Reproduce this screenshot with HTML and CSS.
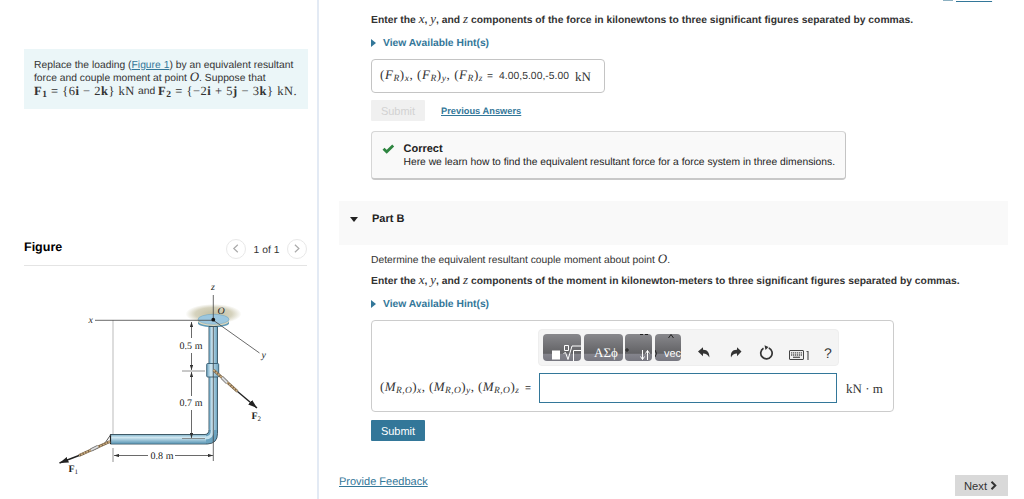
FILE: index.html
```html
<!DOCTYPE html>
<html lang="en">
<head>
  <meta charset="UTF-8">
  <title>Equivalent Resultant Force</title>
  <link rel="stylesheet" href="styles.css">
</head>
<body>

  <div class="page">
    <aside class="left">
      <div class="problem">
        <div class="problem-line l1">Replace the loading (<a href="#">Figure 1</a>) by an equivalent resultant</div>
        <div class="problem-line l2">force and couple moment at point <i class="math">O</i>. Suppose that</div>
        <div class="problem-line l3"><span class="math vec1"><b>F</b><b class="sub">1</b> = {6<b>i</b> − 2<b>k</b>} kN</span><span class="and">and</span><span class="math vec2"><b>F</b><b class="sub">2</b> = {−2<b>i</b> + 5<b>j</b> − 3<b>k</b>} kN.</span></div>
      </div>

      <div class="figure-head">
        <h2>Figure</h2>
        <div class="pager">
          <span class="circle"><svg width="20" height="20" viewBox="0 0 20 20"><path d="M11.8 5.7 7.8 9.5l4 3.8"/></svg></span>
          <span class="count">1 of 1</span>
          <span class="circle"><svg width="20" height="20" viewBox="0 0 20 20"><path d="M7.9 5.7l4 3.8-4 3.8"/></svg></span>
        </div>
      </div>

      <svg class="figure" width="240" height="205" viewBox="50 275 240 205">
        <defs>
          <linearGradient id="pipeV" x1="0" x2="1" y1="0" y2="0">
            <stop offset="0" stop-color="#6fa6c2"/>
            <stop offset=".35" stop-color="#d3e9f3"/>
            <stop offset="1" stop-color="#6ba3bf"/>
          </linearGradient>
          <linearGradient id="pipeH" x1="0" x2="0" y1="0" y2="1">
            <stop offset="0" stop-color="#8dbbd0"/>
            <stop offset=".3" stop-color="#d0e7f1"/>
            <stop offset="1" stop-color="#5f9ab8"/>
          </linearGradient>
          <radialGradient id="ceiling">
            <stop offset="0" stop-color="#c2bea1"/>
            <stop offset=".65" stop-color="#d5d2bd"/>
            <stop offset="1" stop-color="#fff"/>
          </radialGradient>
          <marker id="dim" viewBox="0 0 6 4" refX="6" refY="2" markerWidth="5" markerHeight="3.4" markerUnits="userSpaceOnUse" orient="auto"><path d="M0 0l6 2-6 2z" fill="#333"/></marker>
          <marker id="force" viewBox="0 0 9 6" refX="9" refY="3" markerWidth="9" markerHeight="6" markerUnits="userSpaceOnUse" orient="auto"><path d="M0 0l9 3-9 3z" fill="#222"/></marker>
        </defs>

        <!-- ceiling and flange -->
        <ellipse cx="213.5" cy="314" rx="28" ry="10" fill="url(#ceiling)"/>
        <path d="M198 319.500v4c2 5 29 5 31 0v-4z" fill="#5e9ab8"/>
        <ellipse cx="213.500" cy="321" rx="15.500" ry="5" fill="#ddd8bd"/>
        <ellipse cx="213.500" cy="319.300" rx="15.500" ry="5" fill="#9cc7df" stroke="#6aa0bd" stroke-width=".5"/>

        <!-- pipe -->
        <path d="M113 320v114" stroke="#bbb"/>
        <path d="M110.500 434.500H205q4-.3 4-5v-103h8.500v107q0 10-10 10.500h-97z" fill="#6ba3bf" stroke="#334c59" stroke-width=".9"/>
        <path d="M111 435h95v8.400h-95z" fill="url(#pipeH)"/>
        <path d="M209.400 327h7.700v103h-7.700z" fill="url(#pipeV)"/>
        <path d="M205 438q7.500 0 7.500-8" fill="none" stroke="#c4e1ed" stroke-width="3"/>
        <rect x="206.700" y="363.500" width="12" height="13.500" rx="1" fill="url(#pipeV)" stroke="#345b70" stroke-width=".9"/>
        <path d="M110.500 434.500v9.500" stroke="#222" stroke-width="1.200"/>

        <!-- axes and dimensions -->
        <g stroke="#444" stroke-width=".8" fill="none">
          <path d="M95 320.300h118M213.300 295v25M213.300 327v134M213 320l46.500 33"/>
          <path d="M182 371h23M182 438.500h23M113 448v14" stroke="#777"/>
          <path d="M191.500 338v-16" marker-end="url(#dim)"/>
          <path d="M191.500 353v17" marker-end="url(#dim)"/>
          <path d="M191.500 396v-24" marker-end="url(#dim)"/>
          <path d="M191.500 410v28" marker-end="url(#dim)"/>
          <path d="M148 455.500h-34" marker-end="url(#dim)"/>
          <path d="M175 455.500h38" marker-end="url(#dim)"/>
        </g>
        <circle cx="213.300" cy="319.700" r="1.900" fill="#111"/>

        <!-- ropes and forces -->
        <path d="M105 443l5.500-8M105 443l5.500-1" stroke="#555" fill="none"/>
        <path d="M110 441.500L79 455.500M213.500 370l24 21.500" stroke="#725d43" stroke-width="2.800"/>
        <path d="M110 441.500L79 455.500M213.500 370l24 21.500" stroke="#c7aa7e" stroke-width="1.800" stroke-dasharray="2 1"/>
        <path d="M98 446.500l-7 3.500M222 377.500l5 5" stroke="#777" stroke-width="3.500"/>
        <path d="M98 446.500l-7 3.500M222 377.500l5 5" stroke="#ddd" stroke-width="1.800"/>
        <path d="M79 455.500L59.500 463" stroke="#222" stroke-width="1.400" marker-end="url(#force)"/>
        <path d="M237.500 391.500L257 408" stroke="#222" stroke-width="1.400" marker-end="url(#force)"/>

        <g class="labels">
          <text x="88.500" y="322.500" font-style="italic">x</text>
          <text x="211" y="290" font-style="italic">z</text>
          <text x="217.500" y="314" font-style="italic">O</text>
          <text x="261.500" y="358" font-style="italic">y</text>
          <text x="179.500" y="349" textLength="23">0.5 m</text>
          <text x="179.500" y="406" textLength="23">0.7 m</text>
          <text x="150.500" y="459" textLength="23">0.8 m</text>
          <text x="68.500" y="472" font-weight="bold">F<tspan font-size="7" dy="2" font-weight="normal">1</tspan></text>
          <text x="251.500" y="419" font-weight="bold">F<tspan font-size="7" dy="2" font-weight="normal">2</tspan></text>
        </g>
      </svg>
    </aside>

    <main class="right">
      <div class="review"><span class="review-icon"></span><a href="#">Review</a></div>

      <section class="part">
        <p class="prompt first">Enter the <i class="math">x</i>, <i class="math">y</i>, and <i class="math">z</i> components of the force in kilonewtons to three significant figures separated by commas.</p>
        <div class="hint"><span class="tri-right"></span>View Available Hint(s)</div>
        <div class="answered">
          <span class="math vars-f">(<i>F</i><i class="sub">R</i>)<i class="sub">x</i>, (<i>F</i><i class="sub">R</i>)<i class="sub">y</i>, (<i>F</i><i class="sub">R</i>)<i class="sub">z</i></span>
          <span class="eq">=</span>
          <span class="value">4.00,5.00,-5.00</span>
          <span class="math unit">kN</span>
        </div>
        <div class="actions">
          <button class="btn disabled" disabled>Submit</button>
          <a class="previous" href="#">Previous Answers</a>
        </div>
        <div class="feedback">
          <svg width="13" height="10" viewBox="0 0 13 10"><path d="M1.500 4.800l3.200 3 6.500-6.300" fill="none" stroke="#2e8540" stroke-width="2.800"/></svg>
          <div>
            <strong>Correct</strong>
            <p>Here we learn how to find the equivalent resultant force for a force system in three dimensions.</p>
          </div>
        </div>
      </section>

      <div class="part-head"><span class="tri-down"></span>Part B</div>

      <section class="part">
        <p class="about">Determine the equivalent resultant couple moment about point <i class="math">O</i>.</p>
        <p class="prompt second">Enter the <i class="math">x</i>, <i class="math">y</i>, and <i class="math">z</i> components of the moment in kilonewton-meters to three significant figures separated by commas.</p>
        <div class="hint hint-b"><span class="tri-right"></span>View Available Hint(s)</div>
        <div class="answer-box">
          <div class="toolbar">
            <span class="tool t1"><svg width="38" height="27" viewBox="0 0 38 27"><path d="M9 16.500h8v9H9z" fill="#fff"/><path d="M21.500 11.500h4v5h-4zM20.500 19.500l2-1 2.500 7 4-13.500h9M30.500 27V16.500H38" fill="none" stroke="#fff"/></svg></span>
            <span class="tool t2">ΑΣϕ</span>
            <span class="tool t3"><svg width="27" height="27" viewBox="0 0 27 27"><path d="M0 16h4M2 14v4M15 .5h3m2 0h3" stroke="#222" fill="none"/><path d="M17.500 16v9.500l-2-3M22.500 26v-9.500l-2 3M22.500 16.500l2 3M17.500 25.500l2-3" stroke="#fff" fill="none"/></svg></span>
            <span class="tool t4"><svg width="26" height="27" viewBox="0 0 26 27"><path d="M13.500 4l2.500-3.500L18.500 4M0 16q3 3.500 0 7" stroke="#222" fill="none"/></svg><span>vec</span></span>
            <svg class="icon undo" width="12" height="11" viewBox="0 0 12 11"><path d="M0 4.500L5 .3v2.500c4.500-.2 6.500 3.200 6.400 7.700C9.800 7.600 8.200 6.500 5 6.500v2.700z"/></svg>
            <svg class="icon redo" width="12" height="11" viewBox="0 0 12 11"><path d="M11.500 4.500L7 .3v2.500C2.300 2.600.3 6 1 10.500 2.200 7.600 4 6.500 7 6.500v2.700z"/></svg>
            <svg class="icon reset" width="15" height="16" viewBox="0 0 15 16"><path d="M9.800 3.900a5.700 5.700 0 1 1-5.300.3" fill="none" stroke="#333" stroke-width="1.700"/><path d="M5.500 1.200L9.500 3 6.500 6z"/></svg>
            <svg class="icon keyboard" width="22" height="12" viewBox="0 0 22 12"><rect x=".5" y=".5" width="14" height="9" rx=".5" fill="#eee" stroke="#444"/><path d="M2 2.800h11M2 5h11" stroke="#555" stroke-width="1.300" stroke-dasharray="1.300 .7"/><path d="M4 7.300h7" stroke="#555" stroke-width="1.300"/><path d="M17.500 1.500h1.500v8.500" fill="none" stroke="#555" stroke-width="1.200"/></svg>
            <span class="help">?</span>
          </div>
          <div class="entry">
            <span class="math vars-m">(<i>M</i><i class="sub">R,O</i>)<i class="sub">x</i>, (<i>M</i><i class="sub">R,O</i>)<i class="sub">y</i>, (<i>M</i><i class="sub">R,O</i>)<i class="sub">z</i></span>
            <span class="eq">=</span>
            <input type="text">
            <span class="math unit-m">kN · m</span>
          </div>
        </div>
        <button class="btn submit">Submit</button>
      </section>

      <footer>
        <a class="provide" href="#">Provide Feedback</a>
        <button class="next">Next <svg width="8" height="9" viewBox="0 0 8 9"><path d="M1.500 .8L5.300 4.500 1.500 8.200" fill="none" stroke="#333" stroke-width="2"/></svg></button>
      </footer>
    </main>
  </div>

</body>
</html>
```
FILE: styles.css
```css
* {
  box-sizing: border-box;
}

body {
  margin: 0;
  background: #fff;
  color: #333;
  font-family: "Liberation Sans", Arial, sans-serif;
  font-size: 10.3px;
  overflow: hidden;
  text-rendering: geometricPrecision;
}

p, h2 {
  margin: 0;
}

a {
  color: #337799;
}

svg {
  display: block;
  flex: none;
}

.math {
  font-family: "Liberation Serif", "Times New Roman", serif;
  font-size: 13px;
  font-weight: normal;
  line-height: 1px;
}

.sub {
  font-size: 9.5px;
  position: relative;
  top: 2px;
}

.page {
  display: flex;
  height: 499px;
}

/* left column */
.left {
  width: 319px;
  flex: none;
  padding: 49px 10px 0 24px;
  border-right: 2px solid #e3eaf4;
}

.problem {
  width: 284px;
  height: 60px;
  padding: 10px 0 0 10px;
  background: #ebf6f8;
}

.problem-line {
  height: 13px;
  line-height: 13px;
  white-space: nowrap;
}

.l1 {
  letter-spacing: 0.01px;
}

.l3 {
  display: flex;
}

.l3 .math {
  font-size: 12.5px;
  line-height: 13px;
}

.vec1 {
  width: 104px;
  letter-spacing: 0.5px;
}

.and {
  width: 20px;
}

.vec2 {
  letter-spacing: 0.54px;
}

.figure-head {
  display: flex;
  justify-content: space-between;
  align-items: flex-start;
  width: 283px;
  height: 32px;
  margin-top: 125px;
  border-bottom: 1px solid #e4e4e4;
}

.figure-head h2 {
  margin-top: 6px;
  color: #000;
  font-size: 12.5px;
  line-height: 15px;
}

.pager {
  display: flex;
  align-items: center;
  margin-top: 5px;
}

.circle {
  width: 20px;
  height: 20px;
  border: 1px solid #e8e8e8;
  border-radius: 50%;
}

.circle svg {
  margin: -1px;
}

.circle path {
  fill: none;
  stroke: #aaa;
  stroke-width: 1.2;
}

.count {
  width: 41px;
  padding-top: 2px;
  text-align: center;
}

.figure {
  margin: 9px 0 0 26px;
}

.labels {
  font-family: "Liberation Serif", "Times New Roman", serif;
  font-size: 10px;
  fill: #222;
}

/* right column */
.right {
  width: 669px;
  margin-left: 20px;
}

.review {
  display: flex;
  align-items: flex-end;
  height: 3px;
  padding-left: 604px;
  font-size: 11px;
  line-height: 13px;
}

.review a {
  margin-bottom: -1px;
  text-decoration-thickness: 1px;
  text-underline-offset: 1px;
}

.review-icon {
  width: 10px;
  height: 1px;
  margin: 0 3px 2px 0;
  background: #8db1c2;
}

.part {
  padding-left: 32px;
}

.prompt {
  height: 15px;
  font-weight: bold;
  line-height: 15px;
  letter-spacing: 0.018px;
  white-space: nowrap;
}

.first {
  margin-top: 10px;
}

.hint {
  display: flex;
  align-items: center;
  height: 14px;
  margin-top: 8px;
  color: #337799;
  font-weight: bold;
}

.tri-right {
  margin-right: 7px;
  border: solid transparent;
  border-width: 4px 0 4px 5px;
  border-left-color: #337799;
}

.answered {
  display: flex;
  align-items: center;
  width: 234px;
  height: 34px;
  margin-top: 9px;
  padding-left: 8px;
  border: 1px solid #c4c4c4;
  border-radius: 4px;
}

.vars-f {
  width: 107px;
  letter-spacing: 0.56px;
  white-space: nowrap;
}

.answered .value {
  margin-left: 6px;
  letter-spacing: 0.05px;
}

.unit {
  margin-left: 6px;
}

.actions {
  display: flex;
  align-items: center;
  margin-top: 7px;
}

.btn {
  display: block;
  width: 54px;
  height: 21px;
  padding: 0;
  border: 0;
  border-radius: 1px;
  font: 11px "Liberation Sans", Arial, sans-serif;
}

.disabled {
  background: #f0f0f0;
  color: #d2d2d2;
}

.previous {
  margin-left: 16px;
  font-size: 9.3px;
  font-weight: bold;
}

.feedback {
  display: flex;
  width: 475px;
  height: 49px;
  margin-top: 10px;
  padding: 11px 0 0 10px;
  border: 1px solid #d6d6d6;
  border-right-color: #c4c4c4;
  border-bottom: 2px solid #c8c8c8;
  border-radius: 4px;
  background: #f9f9f9;
  color: #222;
  line-height: 13px;
  white-space: nowrap;
}

.feedback svg {
  margin: 1px 8.5px 0 0;
}

.feedback strong {
  display: block;
  font-size: 11px;
}

.part-head {
  display: flex;
  align-items: center;
  height: 44px;
  margin-top: 21px;
  padding: 0 0 8px 11px;
  background: #f9f9f9;
  color: #222;
  font-size: 11px;
  font-weight: bold;
}

.tri-down {
  margin-right: 14px;
  border: solid transparent;
  border-width: 5px 4px 0;
  border-top-color: #222;
}

.about {
  height: 15px;
  margin-top: 8px;
  line-height: 15px;
}

.second {
  margin-top: 6px;
}

.hint-b {
  margin-top: 8px;
}

.answer-box {
  width: 523px;
  height: 92px;
  margin-top: 9px;
  padding: 8px 0 0 8px;
  border: 1px solid #ccc;
  border-radius: 4px;
}

.toolbar {
  display: flex;
  width: 301px;
  height: 37px;
  margin-left: 158px;
  padding: 4px 0 0 4px;
  border: 1px solid #eee;
  border-radius: 4px;
  background: #f4f4f4;
}

.tool {
  height: 27px;
  margin-right: 3px;
  border-radius: 4px;
  overflow: hidden;
  background: linear-gradient(#88888c, #626265 72%, #85858d 73%, #777780);
  color: #fff;
}

.t1 {
  width: 38px;
}

.t2 {
  width: 39px;
  margin-right: 2px;
  padding: 10px 0 0 10px;
  font: 13px/17px "Liberation Serif", "Times New Roman", serif;
}

.t3 {
  width: 27px;
}

.t4 {
  display: grid;
  width: 26px;
}

.t4 > * {
  grid-area: 1 / 1;
}

.t4 span {
  padding: 14px 0 0 9px;
  font-size: 11px;
  line-height: 13px;
}

.icon {
  fill: #333;
}

.undo {
  margin: 13px 0 0 14px;
}

.redo {
  margin: 13px 0 0 20px;
}

.reset {
  margin: 10px 0 0 17px;
}

.keyboard {
  margin: 16px 0 0 15px;
}

.help {
  margin: 10px 0 0 13px;
  font-size: 14px;
  line-height: 18px;
}

.entry {
  display: flex;
  align-items: center;
  height: 30px;
  margin-top: 7px;
}

.vars-m {
  width: 145px;
  letter-spacing: 0.42px;
  white-space: nowrap;
}

.entry input {
  width: 298px;
  height: 30px;
  margin: 0 0 0 8px;
  border: 1px solid #337799;
}

.unit-m {
  margin-left: 9px;
}

.submit {
  margin-top: 8px;
  background: #337799;
  color: #fff;
}

footer {
  display: flex;
  justify-content: space-between;
  margin-top: 34px;
  font-size: 11px;
}

.provide {
  padding-top: 1px;
}

.next {
  display: flex;
  align-items: center;
  gap: 3px;
  width: 53px;
  height: 21px;
  padding: 0 0 0 9px;
  border: 0;
  background: #d9d9d9;
  color: #333;
  font: 11.2px "Liberation Sans", Arial, sans-serif;
}
```
